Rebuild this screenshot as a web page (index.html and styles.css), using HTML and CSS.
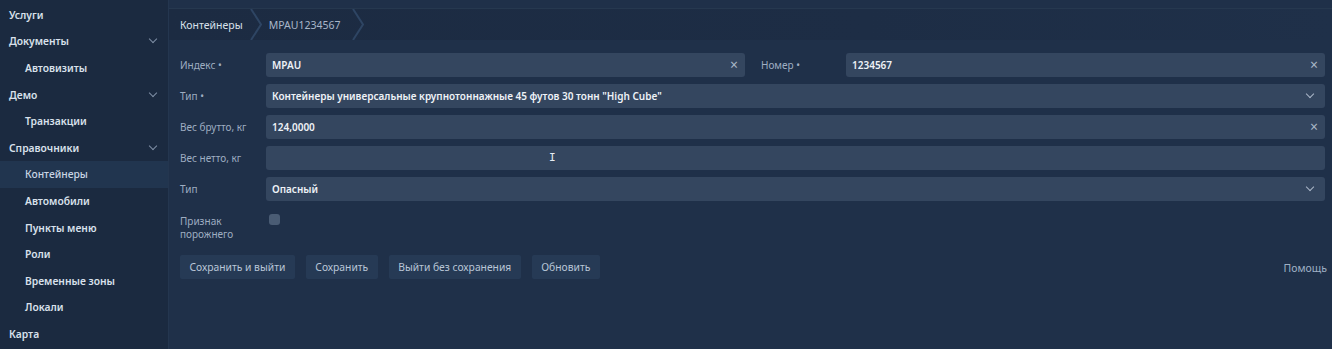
FILE: index.html
```html
<!DOCTYPE html>
<html lang="ru">
<head>
  <meta charset="UTF-8">
  <title>Контейнеры</title>
  <link rel="stylesheet" href="styles.css">
</head>
<body>
  <div class="app">
    <nav class="sidebar">
      <div class="nav-item">Услуги</div>
      <div class="nav-item">Документы <span class="chev"></span></div>
      <div class="nav-item sub">Автовизиты</div>
      <div class="nav-item">Демо <span class="chev"></span></div>
      <div class="nav-item sub">Транзакции</div>
      <div class="nav-item">Справочники <span class="chev"></span></div>
      <div class="nav-item sub active">Контейнеры</div>
      <div class="nav-item sub">Автомобили</div>
      <div class="nav-item sub">Пункты меню</div>
      <div class="nav-item sub">Роли</div>
      <div class="nav-item sub">Временные зоны</div>
      <div class="nav-item sub">Локали</div>
      <div class="nav-item">Карта</div>
    </nav>

    <main class="content">
      <div class="breadcrumbs">
        <span class="crumb first">Контейнеры</span>
        <svg class="sep" width="14" height="31" viewBox="0 0 14 31"><polyline points="2,0 12,15.5 2,31" fill="none" stroke="#2e4563" stroke-width="2"/></svg>
        <span class="crumb">MPAU1234567</span>
        <svg class="sep" width="14" height="31" viewBox="0 0 14 31"><polyline points="2,0 12,15.5 2,31" fill="none" stroke="#2e4563" stroke-width="2"/></svg>
      </div>

      <form class="form">
        <label class="lbl">Индекс •</label>
        <div class="field"><span class="val">MPAU</span><span class="clear">×</span></div>
        <label class="lbl second">Номер •</label>
        <div class="field"><span class="val">1234567</span><span class="clear">×</span></div>

        <label class="lbl">Тип •</label>
        <div class="field wide"><span class="val">Контейнеры универсальные крупнотоннажные 45 футов 30 тонн "High Cube"</span><span class="chev field-chev"></span></div>

        <label class="lbl">Вес брутто, кг</label>
        <div class="field wide"><span class="val">124,0000</span><span class="clear">×</span></div>

        <label class="lbl">Вес нетто, кг</label>
        <div class="field wide"><span class="cursor">I</span></div>

        <label class="lbl">Тип</label>
        <div class="field wide"><span class="val">Опасный</span><span class="chev field-chev"></span></div>

        <label class="lbl two-line">Признак<br>порожнего</label>
        <div class="check-cell"><span class="checkbox"></span></div>
      </form>

      <div class="actions">
        <button class="btn">Сохранить и выйти</button>
        <button class="btn">Сохранить</button>
        <button class="btn">Выйти без сохранения</button>
        <button class="btn">Обновить</button>
        <span class="help">Помощь</span>
      </div>
    </main>
  </div>
</body>
</html>
```

FILE: styles.css
```css
/* Общие */
html, body {
  margin: 0;
  height: 100%;
}

body {
  background: #1f3049;
  font-family: "Noto Sans", "Open Sans", sans-serif;
  font-size: 10px;
  color: #dce4ee;
}

.app {
  display: flex;
  height: 349px;
}

/* Боковое меню */
.sidebar {
  width: 168px;
  background: #1b2a40;
  border-right: 1px solid #24364f;
  padding-top: 1.5px;
}

.nav-item {
  height: 26.6px;
  display: flex;
  align-items: center;
  justify-content: space-between;
  padding: 0 10px 0 9px;
  font-size: 10.3px;
  font-weight: 600;
  color: #d9e1ec;
}

.nav-item.sub {
  padding-left: 25px;
}

.nav-item.active {
  background: #21354f;
  color: #c9d5e4;
  font-weight: 500;
}

.chev {
  width: 5px;
  height: 5px;
  border-right: 1px solid #7f8fa5;
  border-bottom: 1px solid #7f8fa5;
  transform: rotate(45deg);
  margin-top: -4px;
  margin-right: 2px;
}

/* Основная часть */
.content {
  flex: 1;
  padding: 0 7px 0 11px;
  display: flex;
  flex-direction: column;
}

.breadcrumbs {
  margin: 8px -7px 0 -11px;
  padding-left: 11px;
  height: 31px;
  display: flex;
  align-items: center;
  border-top: 1px solid #26384f;
  background: linear-gradient(90deg, #1c2b42 0%, #1d2d45 60%, #1f3049 100%);
  font-size: 10.5px;
}

.crumb {
  color: #a8b6c9;
  padding: 0 10px 0 6px;
}

.crumb.first {
  color: #d8e0ea;
  padding-left: 0;
  padding-right: 6px;
}

.sep {
  display: block;
}

/* Форма */
.form {
  margin-top: 13px;
  display: grid;
  grid-template-columns: 86px 1fr 101px 1fr;
  grid-auto-rows: 24px;
  row-gap: 7px;
  align-items: center;
}

.lbl {
  font-size: 10px;
  color: #9eadc1;
}

.lbl.second {
  padding-left: 16px;
}

.field {
  height: 24px;
  background: #34465f;
  border-radius: 3px;
  display: flex;
  align-items: center;
  justify-content: space-between;
  padding: 0 8px 0 6px;
  position: relative;
}

.field.wide {
  grid-column: 2 / 5;
}

.val {
  font-size: 10px;
  font-weight: 600;
  color: #eef2f7;
}

.clear {
  color: #aab7c8;
  font-size: 14px;
  line-height: 1;
  margin-right: -1px;
}

.field-chev {
  margin-right: 4px;
  border-color: #aab7c8;
}

.cursor {
  position: absolute;
  left: 283px;
  top: 5px;
  font-family: "DejaVu Sans Mono", monospace;
  font-size: 11px;
  color: #e6ecf3;
}

.two-line {
  line-height: 13px;
  align-self: start;
  padding-top: 7px;
}

.check-cell {
  align-self: start;
  padding: 6px 0 0 3px;
}

.checkbox {
  display: block;
  width: 11px;
  height: 11px;
  border-radius: 3px;
  background: #4a5c74;
}

/* Кнопки */
.actions {
  margin-top: 23px;
  display: flex;
  align-items: center;
  gap: 11px;
}

.btn {
  height: 24px;
  padding: 0 9.5px;
  border: none;
  border-radius: 2px;
  background: #263a55;
  color: #b9c6d7;
  font-family: inherit;
  font-size: 10.3px;
  font-weight: 400;
}

.help {
  margin-left: auto;
  margin-right: -2px;
  color: #9fb0c5;
  font-size: 10.5px;
  padding-top: 2px;
}
```
